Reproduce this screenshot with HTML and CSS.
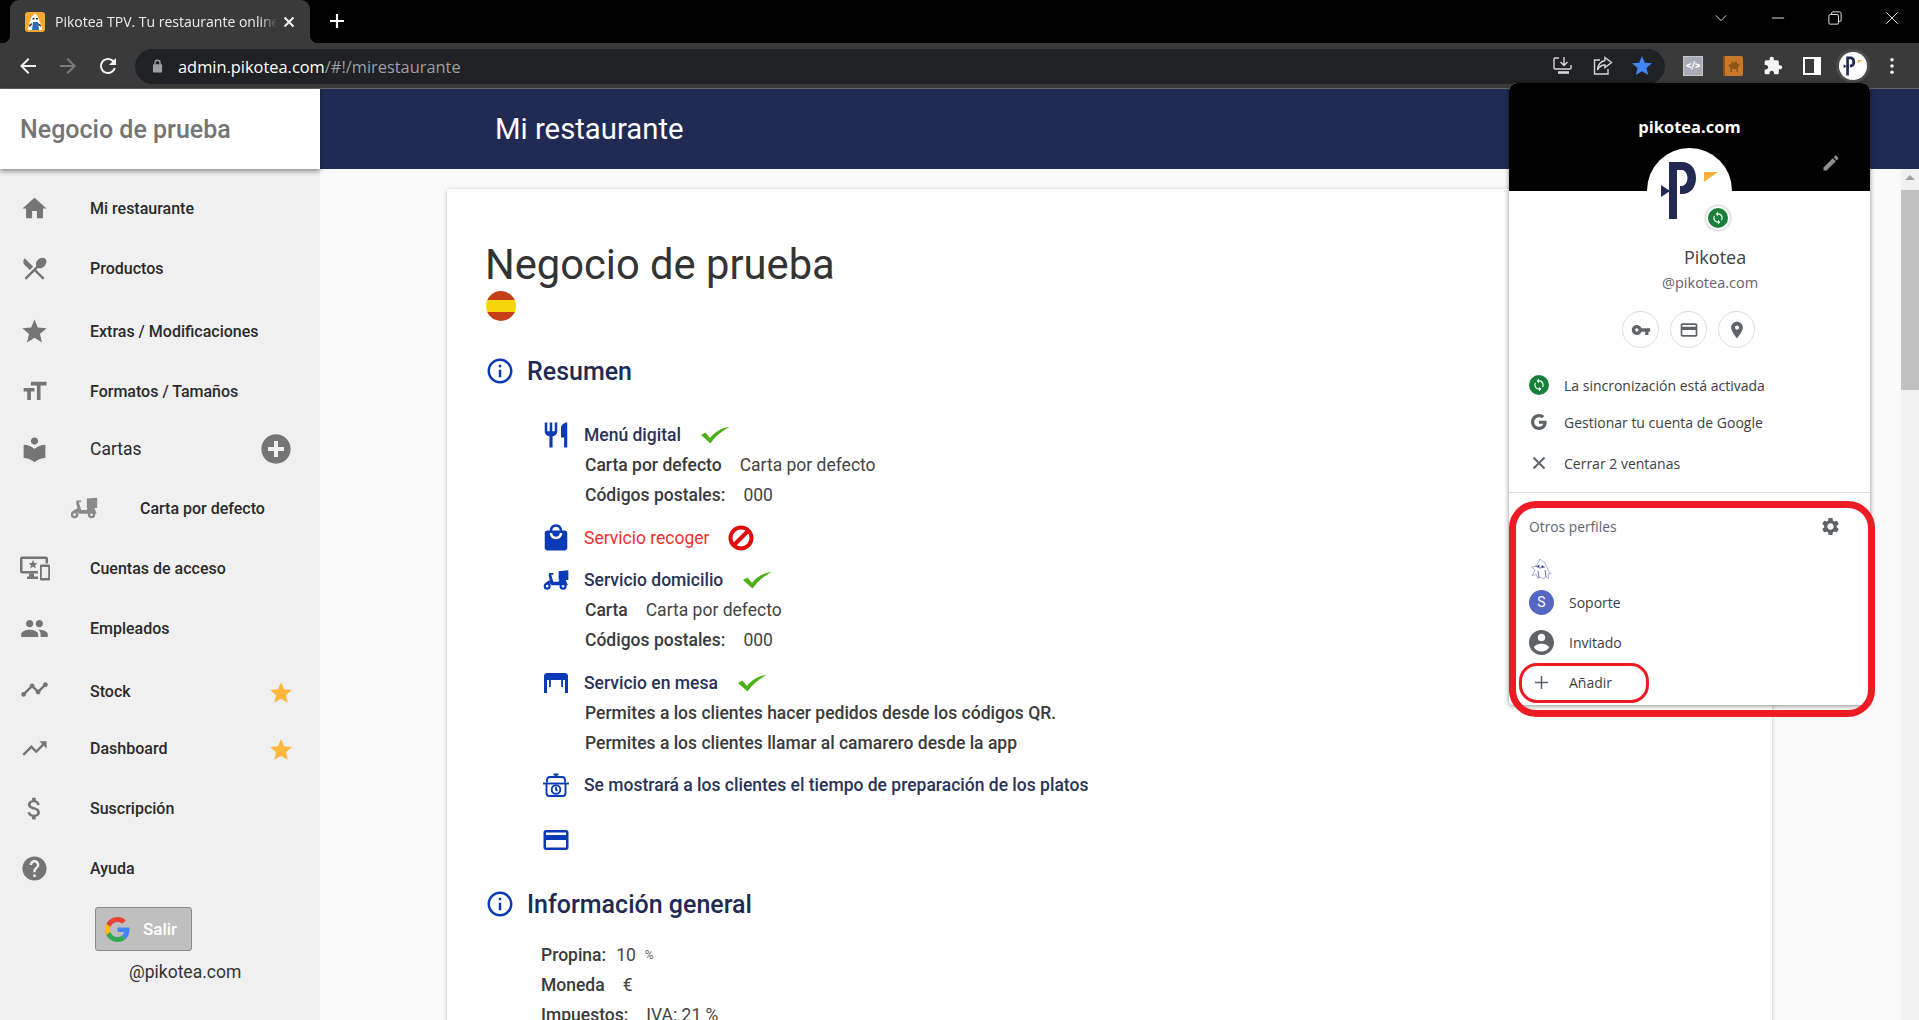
FILE: index.html
```html
<!DOCTYPE html>
<html lang="es">
<head>
    <meta charset="UTF-8">
    <title>Pikotea TPV. Tu restaurante online</title>
    <link rel="stylesheet" href="styles.css">
</head>
<body>

    <!-- shared icons -->
    <svg class="defs" aria-hidden="true">
        <symbol id="i-star" viewBox="0 0 24 24"><path d="M12 17.27L18.18 21l-1.64-7.03L22 9.24l-7.19-.61L12 2 9.19 8.63 2 9.24l5.46 4.73L5.82 21z"/></symbol>
        <symbol id="i-sync" viewBox="0 0 24 24"><path d="M12 4V1L8 5l4 4V6c3.31 0 6 2.69 6 6 0 1.01-.25 1.97-.7 2.8l1.46 1.46C19.54 15.03 20 13.57 20 12c0-4.42-3.58-8-8-8zm0 14c-3.31 0-6-2.69-6-6 0-1.01.25-1.97.7-2.8L5.24 7.74C4.46 8.97 4 10.43 4 12c0 4.42 3.58 8 8 8v3l4-4-4-4v3z"/></symbol>
        <symbol id="i-info" viewBox="0 0 24 24"><path d="M11 7h2v2h-2zm0 4h2v6h-2zm1-9C6.48 2 2 6.48 2 12s4.48 10 10 10 10-4.48 10-10S17.52 2 12 2zm0 18c-4.41 0-8-3.59-8-8s3.59-8 8-8 8 3.59 8 8-3.59 8-8 8z"/></symbol>
        <symbol id="i-card" viewBox="0 0 24 24"><path d="M20 4H4c-1.11 0-1.99.89-1.99 2L2 18c0 1.11.89 2 2 2h16c1.11 0 2-.89 2-2V6c0-1.11-.89-2-2-2zm0 14H4v-6h16v6zm0-10H4V6h16v2z"/></symbol>
        <symbol id="i-scooter" viewBox="-1 -6 34 34">
            <path d="M19 1l11-1v11H19z"/>
            <path d="M8 3h5v2h-2.500l2.500 8h5.500l1.500-2h7l2.500 6H10.500C10 15 8 14 4 16.500 3 14.500 5.500 12.500 9 11.500L7.500 5H8z"/>
            <path fill-rule="evenodd" d="M6 14a4 4 0 1 0 0 8 4 4 0 0 0 0-8zm0 2.500a1.500 1.500 0 1 1 0 3 1.500 1.500 0 0 1 0-3zM24 14a4 4 0 1 0 0 8 4 4 0 0 0 0-8zm0 2.500a1.500 1.500 0 1 1 0 3 1.500 1.500 0 0 1 0-3z"/>
        </symbol>
        <symbol id="i-check" viewBox="0 0 30 18"><path d="M1 9l4.500-2.500L10 12C15 6 22 1.500 29.500 1 22 5 15.500 10 10.500 17.500z"/></symbol>
        <symbol id="i-logo" viewBox="0 0 85 85">
            <circle cx="42.500" cy="42.500" r="42.500" fill="#fff"/>
            <path fill="#212a52" d="M22 14H35C44 14 49 21 49 30S44 46 35 46H33V38H35C38 38 40.500 34 40.500 30S38 22 35 22H30V71H22Z"/>
            <path fill="#212a52" d="M14 37l9 6-9 6zM23 43l7-5v11z"/>
            <path fill="#fbb03b" d="M57 24h14l-14 10z"/>
        </symbol>
        <symbol id="i-g" viewBox="0 0 48 48">
            <path fill="#EA4335" d="M24 9.500c3.540 0 6.710 1.220 9.210 3.600l6.850-6.850C35.900 2.380 30.470 0 24 0 14.620 0 6.510 5.380 2.560 13.220l7.980 6.190C12.430 13.720 17.740 9.500 24 9.500z"/>
            <path fill="#4285F4" d="M46.980 24.550c0-1.570-.15-3.090-.38-4.550H24v9.020h12.940c-.58 2.960-2.260 5.480-4.780 7.180l7.730 6c4.510-4.180 7.090-10.360 7.090-17.650z"/>
            <path fill="#FBBC05" d="M10.530 28.590c-.48-1.450-.76-2.990-.76-4.590s.27-3.140.76-4.590l-7.980-6.190C.92 16.460 0 20.120 0 24c0 3.880.92 7.540 2.560 10.780l7.970-6.190z"/>
            <path fill="#34A853" d="M24 48c6.480 0 11.930-2.130 15.890-5.810l-7.730-6c-2.150 1.450-4.920 2.300-8.160 2.300-6.260 0-11.570-4.220-13.470-9.910l-7.980 6.190C6.510 42.620 14.620 48 24 48z"/>
        </symbol>
    </svg>

    <!-- browser chrome -->
    <div class="tabstrip">
        <div class="tab">
            <svg class="favicon" viewBox="0 0 20 20">
                <rect width="20" height="20" rx="3" fill="#f5a733"/>
                <path fill="#fff" d="M10 1l3 4 3.500 9 1 4H2.500l1.500-5 2-7z"/>
                <path fill="#2f6fb5" d="M8 10h5l1 8H7z"/>
                <path fill="#333" d="M7.500 6h2v1.500h-2zM11 6h2v1.500h-2zM4 13l3-2v1.500L4.500 15zM16 13l-3-2v1.500l2.500 2.500z"/>
            </svg>
            <span class="tab-title">Pikotea TPV. Tu restaurante online</span>
            <svg class="tab-close" viewBox="0 0 12 12"><path d="M1.500 1.500l9 9M10.500 1.500l-9 9"/></svg>
        </div>
        <svg class="new-tab" viewBox="0 0 16 16"><path d="M8 1v14M1 8h14"/></svg>
        <div class="window-controls">
            <svg viewBox="0 0 16 16"><path d="M2 5l6 6 6-6"/></svg>
            <svg viewBox="0 0 16 16"><path d="M1 8h14"/></svg>
            <svg viewBox="0 0 16 16"><path d="M4 4V2.500A1.500 1.500 0 0 1 5.500 1H13a2 2 0 0 1 2 2v7.500A1.500 1.500 0 0 1 13.500 12H12M2.500 4H10.500A1.500 1.500 0 0 1 12 5.500V13.500A1.500 1.500 0 0 1 10.500 15H2.500A1.500 1.500 0 0 1 1 13.500V5.500A1.500 1.500 0 0 1 2.500 4z"/></svg>
            <svg viewBox="0 0 16 16"><path d="M1.500 1.500l13 13M14.500 1.500l-13 13"/></svg>
        </div>
    </div>

    <div class="toolbar">
        <svg class="nav-btn" viewBox="0 0 24 24"><path fill="#f1f1f1" d="M20 11H7.830l5.590-5.590L12 4l-8 8 8 8 1.410-1.410L7.830 13H20v-2z"/></svg>
        <svg class="nav-btn" viewBox="0 0 24 24"><path fill="#7c7c7c" d="M12 4l-1.410 1.410L16.170 11H4v2h12.170l-5.580 5.590L12 20l8-8z"/></svg>
        <svg class="nav-btn" viewBox="0 0 24 24"><path fill="#f1f1f1" d="M17.650 6.350C16.200 4.900 14.210 4 12 4c-4.420 0-7.990 3.580-7.990 8s3.570 8 7.990 8c3.730 0 6.840-2.550 7.730-6h-2.080c-.82 2.330-3.040 4-5.650 4-3.310 0-6-2.690-6-6s2.690-6 6-6c1.660 0 3.140.69 4.220 1.780L13 11h7V4l-2.350 2.350z"/></svg>
        <div class="omnibox">
            <svg class="lock" viewBox="0 0 12 14"><path fill="#9aa0a6" d="M10 5H9.500V3.500a3.500 3.500 0 0 0-7 0V5H2a1 1 0 0 0-1 1v7a1 1 0 0 0 1 1h8a1 1 0 0 0 1-1V6a1 1 0 0 0-1-1zM4 5V3.500a2 2 0 0 1 4 0V5z"/></svg>
            <span class="url">admin.pikotea.com<span class="url-path">/#!/mirestaurante</span></span>
            <div class="omni-actions">
                <svg viewBox="0 0 20 20"><path fill="none" stroke="#d6d6d6" stroke-width="1.400" d="M6 2H2a1 1 0 0 0-1 1v9a1 1 0 0 0 1 1h15a1 1 0 0 0 1-1V9M11 1v8M7.500 6l3.500 3.500L14.500 6"/><path fill="none" stroke="#d6d6d6" stroke-width="2.600" d="M5 16.500h11"/></svg>
                <svg viewBox="0 0 20 20"><path fill="none" stroke="#d6d6d6" stroke-width="1.400" d="M7 4H1.500v14H15v-5M12 1.500l6.500 5-6.500 5V9C8.500 9 6 11 4.500 14 4.500 9 8 5 12 4.500z"/></svg>
                <svg class="omni-star" viewBox="0 0 24 24"><use href="#i-star"/></svg>
            </div>
        </div>
        <div class="extensions">
            <div class="ext-code">&lt;/&gt;</div>
            <svg class="ext" viewBox="0 0 20 20">
                <rect width="20" height="20" rx="2" fill="#c9782a"/>
                <path fill="#8a4f14" d="M0 0h2v20H0z"/>
                <path fill="#8e5518" d="M5 9l3-1 1-3 2 2 2-2 2 3h2l-1 2-1 1v5h-1.500v-3H9v3H7.500v-4z"/>
            </svg>
            <svg class="ext" viewBox="0 0 24 24"><path fill="#f5f5f5" d="M20.500 11H19V7c0-1.100-.9-2-2-2h-4V3.500C13 2.120 11.880 1 10.500 1S8 2.120 8 3.500V5H4c-1.100 0-1.990.9-1.990 2v3.800H3.500c1.490 0 2.700 1.210 2.700 2.700s-1.210 2.700-2.700 2.700H2V20c0 1.100.9 2 2 2h3.800v-1.500c0-1.490 1.210-2.700 2.700-2.700 1.490 0 2.700 1.210 2.700 2.700V22H17c1.100 0 2-.9 2-2v-4h1.500c1.380 0 2.500-1.120 2.500-2.500S21.880 11 20.500 11z"/></svg>
            <svg class="ext" viewBox="0 0 20 20"><path fill="#fff" fill-rule="evenodd" d="M1 1h18v18H1zM3 3v14h9V3z"/></svg>
            <div class="avatar-ring"><svg viewBox="0 0 85 85"><use href="#i-logo"/></svg></div>
            <svg class="kebab" viewBox="0 0 6 20"><circle cx="3" cy="3" r="2" fill="#f1f1f1"/><circle cx="3" cy="10" r="2" fill="#f1f1f1"/><circle cx="3" cy="17" r="2" fill="#f1f1f1"/></svg>
        </div>
    </div>

    <div class="app">
        <aside class="sidebar">
            <div class="brand">Negocio de prueba</div>
            <nav class="nav">
                <a class="nav-row">
                    <svg viewBox="0 0 24 24"><path d="M10 20v-6h4v6h5v-8h3L12 3 2 12h3v8z"/></svg>
                    <span>Mi restaurante</span>
                </a>
                <a class="nav-row">
                    <svg viewBox="0 0 24 24"><path d="M8.100 13.340l2.830-2.830L3.910 3.500c-1.560 1.560-1.560 4.090 0 5.660l4.190 4.180zm6.780-1.810c1.530.71 3.680.21 5.270-1.380 1.910-1.910 2.280-4.650.81-6.120-1.460-1.460-4.200-1.100-6.120.81-1.590 1.590-2.090 3.740-1.380 5.270L3.700 19.870l1.410 1.410L12 14.410l6.880 6.880 1.410-1.410L13.410 13l1.470-1.470z"/></svg>
                    <span>Productos</span>
                </a>
                <a class="nav-row low3">
                    <svg viewBox="0 0 24 24"><use href="#i-star"/></svg>
                    <span>Extras / Modificaciones</span>
                </a>
                <a class="nav-row">
                    <svg viewBox="0 0 24 24"><path d="M9 4v3h5v12h3V7h5V4H9zm-6 8h3v7h3v-7h3V9H3v3z"/></svg>
                    <span>Formatos / Tamaños</span>
                </a>
                <a class="nav-row up2">
                    <svg viewBox="0 0 24 24"><path d="M12 11.550C9.640 9.350 6.480 8 3 8v11c3.480 0 6.640 1.350 9 3.550 2.360-2.190 5.520-3.550 9-3.550V8c-3.480 0-6.640 1.350-9 3.550zM12 8c1.660 0 3-1.340 3-3s-1.340-3-3-3-3 1.340-3 3 1.340 3 3 3z"/></svg>
                    <span class="plain">Cartas</span>
                    <svg class="nav-add" viewBox="0 0 24 24"><path d="M12 1C5.900 1 1 5.900 1 12s4.900 11 11 11 11-4.900 11-11S18.100 1 12 1zm6 12.500h-4.500V18h-3v-4.500H6v-3h4.500V6h3v4.500H18z"/></svg>
                </a>
                <a class="nav-row sub up1">
                    <svg viewBox="0 0 34 34"><use href="#i-scooter"/></svg>
                    <span>Carta por defecto</span>
                </a>
                <a class="nav-row">
                    <svg class="wide" viewBox="0 0 30 24">
                        <path d="M2 0h24a2 2 0 0 1 2 2v5h-2.500V2.500h-23v12H18V17H2a2 2 0 0 1-2-2V2a2 2 0 0 1 2-2z"/>
                        <path d="M9 17h5v3h4v2.500H7V20h2z"/>
                        <path d="M21 8h8a1 1 0 0 1 1 1v14a1 1 0 0 1-1 1h-8a1 1 0 0 1-1-1V9a1 1 0 0 1 1-1zm.8 2.500v11h6.400v-11z"/>
                        <path d="M13 3.500l1.300 2.900 3.100.3-2.300 2 .7 3.100-2.800-1.600-2.800 1.600.7-3.100-2.300-2 3.100-.3z"/>
                    </svg>
                    <span>Cuentas de acceso</span>
                </a>
                <a class="nav-row">
                    <svg viewBox="0 0 24 24"><path d="M16 11c1.660 0 2.990-1.340 2.990-3S17.660 5 16 5c-1.660 0-3 1.340-3 3s1.340 3 3 3zm-8 0c1.660 0 2.990-1.340 2.990-3S9.660 5 8 5C6.340 5 5 6.340 5 8s1.340 3 3 3zm0 2c-2.330 0-7 1.170-7 3.500V19h14v-2.500c0-2.330-4.670-3.500-7-3.500zm8 0c-.29 0-.62.02-.97.05 1.160.84 1.970 1.970 1.970 3.450V19h6v-2.500c0-2.330-4.670-3.500-7-3.500z"/></svg>
                    <span>Empleados</span>
                </a>
                <a class="nav-row low3">
                    <svg class="raised" viewBox="0 0 24 24"><path d="M23 8c0 1.100-.9 2-2 2-.18 0-.35-.02-.51-.07l-3.560 3.550c.05.16.07.34.07.52 0 1.100-.9 2-2 2s-2-.9-2-2c0-.18.02-.36.07-.52l-2.550-2.550c-.16.05-.34.07-.52.07s-.36-.02-.52-.07l-4.550 4.560c.05.16.07.33.07.51 0 1.100-.9 2-2 2s-2-.9-2-2 .9-2 2-2c.18 0 .35.02.51.07l4.560-4.550C8.020 9.360 8 9.180 8 9c0-1.100.9-2 2-2s2 .9 2 2c0 .18-.02.36-.07.52l2.550 2.550c.16-.05.34-.07.52-.07s.36.02.52.07l3.550-3.560C19.020 8.350 19 8.180 19 8c0-1.100.9-2 2-2s2 .9 2 2z"/></svg>
                    <span>Stock</span>
                    <svg class="nav-pro" viewBox="0 0 24 24"><use href="#i-star"/></svg>
                </a>
                <a class="nav-row up3">
                    <svg viewBox="0 0 24 24"><path d="M16 6l2.290 2.290-4.880 4.880-4-4L2 16.590 3.410 18l6-6 4 4 6.300-6.290L22 12V6z"/></svg>
                    <span>Dashboard</span>
                    <svg class="nav-pro" viewBox="0 0 24 24"><use href="#i-star"/></svg>
                </a>
                <a class="nav-row">
                    <svg viewBox="0 0 24 24"><path d="M11.800 10.900c-2.270-.59-3-1.200-3-2.150 0-1.090 1.010-1.850 2.700-1.850 1.780 0 2.440.85 2.500 2.100h2.210c-.07-1.720-1.120-3.300-3.210-3.810V3h-3v2.160c-1.940.42-3.500 1.680-3.500 3.610 0 2.310 1.910 3.460 4.700 4.130 2.500.6 3 1.480 3 2.410 0 .69-.49 1.790-2.700 1.790-2.060 0-2.870-.92-2.980-2.100h-2.200c.12 2.190 1.760 3.420 3.680 3.830V21h3v-2.150c1.950-.37 3.500-1.500 3.500-3.550 0-2.840-2.430-3.810-4.700-4.400z"/></svg>
                    <span>Suscripción</span>
                </a>
                <a class="nav-row">
                    <svg viewBox="0 0 24 24"><path d="M12 2C6.480 2 2 6.480 2 12s4.480 10 10 10 10-4.480 10-10S17.520 2 12 2zm1 17h-2v-2h2v2zm2.070-7.750l-.9.920C13.450 12.900 13 13.500 13 15h-2v-.5c0-1.100.45-2.100 1.170-2.830l1.240-1.260c.37-.36.59-.86.59-1.410 0-1.100-.9-2-2-2s-2 .9-2 2H8c0-2.210 1.790-4 4-4s4 1.790 4 4c0 .88-.36 1.680-.93 2.250z"/></svg>
                    <span>Ayuda</span>
                </a>
            </nav>
            <button class="logout">
                <svg viewBox="0 0 48 48"><use href="#i-g"/></svg>
                <span>Salir</span>
            </button>
            <div class="sidebar-email">@pikotea.com</div>
        </aside>

        <div class="main">
            <header class="topbar">Mi restaurante</header>
            <div class="content">
                <section class="card">
                    <h1>Negocio de prueba</h1>
                    <div class="flag"></div>

                    <h2 class="section-title">
                        <svg viewBox="0 0 24 24"><use href="#i-info"/></svg>
                        Resumen
                    </h2>

                    <div class="services first">
                        <div class="line head">
                            <svg class="svc-icon" viewBox="0 0 24 24"><path d="M11 9H9V2H7v7H5V2H3v7c0 2.120 1.660 3.840 3.750 3.970V22h2.500v-9.030C11.340 12.840 13 11.120 13 9V2h-2v7zm5-3v8h2.500v8H21V2c-2.760 0-5 2.240-5 4z"/></svg>
                            <span>Menú digital</span>
                            <svg class="check" viewBox="0 0 30 18"><use href="#i-check"/></svg>
                        </div>
                        <div class="line detail"><b>Carta por defecto</b><span class="gap19">Carta por defecto</span></div>
                        <div class="line detail"><b>Códigos postales:</b><span class="gap19">000</span></div>
                    </div>

                    <div class="services">
                        <div class="line head off">
                            <svg class="svc-icon" viewBox="0 0 24 24"><path d="M19 6h-2c0-2.760-2.240-5-5-5S7 3.240 7 6H5c-1.100 0-1.990.9-1.990 2L3 20c0 1.100.9 2 2 2h14c1.100 0 2-.9 2-2V8c0-1.100-.9-2-2-2zm-7-3c1.660 0 3 1.340 3 3H9c0-1.660 1.340-3 3-3zm0 10c-2.760 0-5-2.240-5-5h2c0 1.660 1.340 3 3 3s3-1.340 3-3h2c0 2.760-2.240 5-5 5z"/></svg>
                            <span>Servicio recoger</span>
                            <svg class="forbid" viewBox="0 0 26 26"><circle cx="13" cy="13" r="10.500"/><path d="M6 20L20 6"/></svg>
                        </div>
                    </div>

                    <div class="services">
                        <div class="line head">
                            <svg class="svc-icon" viewBox="0 0 34 34"><use href="#i-scooter"/></svg>
                            <span>Servicio domicilio</span>
                            <svg class="check" viewBox="0 0 30 18"><use href="#i-check"/></svg>
                        </div>
                        <div class="line detail"><b>Carta</b><span class="gap19">Carta por defecto</span></div>
                        <div class="line detail"><b>Códigos postales:</b><span class="gap19">000</span></div>
                    </div>

                    <div class="services">
                        <div class="line head">
                            <svg class="svc-icon" viewBox="-3 -5 30 30">
                                <path d="M3 0h18c1.500 0 3 1 3 3v17h-3V7H3v13H0V3C0 1 1.500 0 3 0z"/>
                                <path d="M5 7h1.800v7H5zM17.200 7H19v7h-1.800z"/>
                            </svg>
                            <span>Servicio en mesa</span>
                            <svg class="check" viewBox="0 0 30 18"><use href="#i-check"/></svg>
                        </div>
                        <div class="line detail"><b>Permites a los clientes hacer pedidos desde los códigos QR.</b></div>
                        <div class="line detail"><b>Permites a los clientes llamar al camarero desde la app</b></div>
                    </div>

                    <div class="services single">
                        <div class="line head">
                            <svg class="svc-icon pot" viewBox="-1.500 -3 30 30">
                                <path d="M11 1.500h5M13.500 1.500V4"/>
                                <path d="M4.500 9.500V7a3 3 0 0 1 3-3h12a3 3 0 0 1 3 3v2.500"/>
                                <path d="M.5 10.500h26"/>
                                <path d="M4 10.500V20a3 3 0 0 0 3 3h13a3 3 0 0 0 3-3v-9.500"/>
                                <circle cx="13.500" cy="16.500" r="4.300"/>
                                <path d="M13.500 14v2.800l1.600 1"/>
                            </svg>
                            <span>Se mostrará a los clientes el tiempo de preparación de los platos</span>
                        </div>
                    </div>

                    <div class="services pay">
                        <div class="line head">
                            <svg class="svc-icon" viewBox="0 0 24 24"><use href="#i-card"/></svg>
                        </div>
                    </div>

                    <h2 class="section-title general">
                        <svg viewBox="0 0 24 24"><use href="#i-info"/></svg>
                        Información general
                    </h2>

                    <div class="general-list">
                        <div class="line"><b>Propina:</b><span class="gap10">10</span><small>%</small></div>
                        <div class="line"><b>Moneda</b><span class="gap19">€</span></div>
                        <div class="line"><b>Impuestos:</b><span class="gap19">IVA: 21 %</span></div>
                    </div>
                </section>
                <div class="scrollbar">
                    <div class="scroll-arrow"></div>
                    <div class="scroll-thumb"></div>
                </div>
            </div>
        </div>
    </div>

    <!-- profile menu, open over the page -->
    <div class="profile">
        <div class="profile-banner">
            <span class="profile-domain">pikotea.com</span>
            <svg class="profile-edit" viewBox="0 0 24 24"><path d="M3 17.250V21h3.750L17.810 9.940l-3.750-3.750L3 17.250zM20.710 7.040c.39-.39.39-1.020 0-1.410l-2.340-2.340c-.39-.39-1.020-.39-1.410 0l-1.830 1.830 3.750 3.750 1.830-1.830z"/></svg>
        </div>
        <div class="profile-photo">
            <svg viewBox="0 0 85 85"><use href="#i-logo"/></svg>
            <div class="sync-badge"><span class="sync-dot large"><svg viewBox="0 0 24 24"><use href="#i-sync"/></svg></span></div>
        </div>
        <div class="profile-name">Pikotea</div>
        <div class="profile-mail">@pikotea.com</div>
        <div class="profile-buttons">
            <div class="round-btn"><svg viewBox="0 0 24 24"><path d="M12.650 10C11.830 7.670 9.610 6 7 6c-3.310 0-6 2.690-6 6s2.690 6 6 6c2.610 0 4.830-1.670 5.650-4H17v4h4v-4h2v-4H12.650zM7 14c-1.100 0-2-.9-2-2s.9-2 2-2 2 .9 2 2-.9 2-2 2z"/></svg></div>
            <div class="round-btn"><svg viewBox="0 0 24 24"><use href="#i-card"/></svg></div>
            <div class="round-btn"><svg viewBox="0 0 24 24"><path d="M12 2C8.130 2 5 5.130 5 9c0 5.250 7 13 7 13s7-7.750 7-13c0-3.870-3.130-7-7-7zm0 9.500c-1.380 0-2.500-1.120-2.500-2.500s1.120-2.500 2.500-2.500 2.500 1.120 2.500 2.500-1.120 2.500-2.500 2.500z"/></svg></div>
        </div>
        <div class="menu-list">
            <div class="menu-row"><span class="sync-dot"><svg viewBox="0 0 24 24"><use href="#i-sync"/></svg></span>La sincronización está activada</div>
            <div class="menu-row"><svg class="menu-g" viewBox="0 0 48 48"><path d="M46.980 24.550c0-1.570-.15-3.090-.38-4.550H24v9.020h12.940c-.58 2.960-2.260 5.480-4.780 7.180C30 37.600 27.240 38.490 24 38.490c-7.800 0-14.230-6.500-14.230-14.490S16.200 9.500 24 9.500c3.540 0 6.710 1.220 9.210 3.600l6.850-6.850C35.900 2.380 30.470 0 24 0 10.750 0 0 10.750 0 24s10.750 24 24 24c6.480 0 11.930-2.130 15.890-5.810 4.510-4.180 7.090-10.360 7.090-17.640z"/></svg>Gestionar tu cuenta de Google</div>
            <div class="menu-row"><svg class="menu-x" viewBox="0 0 14 14"><path d="M1.500 1.500l11 11M12.500 1.500l-11 11"/></svg>Cerrar 2 ventanas</div>
        </div>
        <div class="others">
            <div class="others-head">
                <span>Otros perfiles</span>
                <svg viewBox="0 0 24 24"><path d="M19.140 12.940c.04-.3.06-.61.06-.94 0-.32-.02-.64-.07-.94l2.030-1.580c.18-.14.230-.41.120-.61l-1.920-3.320c-.12-.22-.37-.29-.59-.22l-2.390.96c-.5-.38-1.030-.7-1.620-.94l-.36-2.540c-.04-.24-.24-.41-.48-.41h-3.840c-.24 0-.43.17-.47.41l-.36 2.540c-.59.24-1.130.57-1.620.94l-2.390-.96c-.22-.08-.47 0-.59.22L2.740 8.870c-.12.21-.08.47.12.61l2.030 1.580c-.05.3-.09.63-.09.94s.02.64.07.94l-2.030 1.580c-.18.14-.23.41-.12.61l1.920 3.320c.12.22.37.29.59.22l2.390-.96c.5.38 1.030.7 1.620.94l.36 2.540c.05.24.24.41.48.41h3.840c.24 0 .44-.17.47-.41l.36-2.540c.59-.24 1.130-.56 1.620-.94l2.390.96c.22.08.47 0 .59-.22l1.920-3.320c.12-.22.07-.47-.12-.61l-2.010-1.580zM12 15.600c-1.980 0-3.600-1.620-3.600-3.600s1.620-3.600 3.600-3.600 3.600 1.620 3.600 3.600-1.620 3.600-3.600 3.600z"/></svg>
            </div>
            <div class="profile-row mascot">
                <svg viewBox="0 0 22 22">
                    <path fill="none" stroke="#a9afd0" d="M10 1l5 4 3 7 3 4-3-.5.5 5-3-2-2 2.500-3-2-3 1.500-1-4-4.500 1L5 12 1.500 9 6 8.500z"/>
                    <path fill="none" stroke="#6a73b0" d="M5 8l5 2 5-1M8 13l1 7M15 12l1 7"/>
                    <circle cx="8.500" cy="8" r="1.100" fill="#2a3a9a"/><circle cx="12.500" cy="8.500" r="1.100" fill="#2a3a9a"/>
                </svg>
            </div>
            <div class="profile-row"><span class="letter-avatar">S</span>Soporte</div>
            <div class="profile-row"><svg class="guest" viewBox="2 2 20 20"><path d="M12 2C6.480 2 2 6.480 2 12s4.480 10 10 10 10-4.480 10-10S17.520 2 12 2zm0 3c1.660 0 3 1.340 3 3s-1.340 3-3 3-3-1.340-3-3 1.340-3 3-3zm0 14.200c-2.500 0-4.710-1.280-6-3.220.03-1.990 4-3.080 6-3.080 1.990 0 5.970 1.090 6 3.080-1.290 1.940-3.500 3.220-6 3.220z"/></svg>Invitado</div>
            <div class="profile-row"><svg class="plus" viewBox="0 0 16 16"><path d="M8 1v14M1 8h14"/></svg>Añadir</div>
        </div>
    </div>

    <!-- red marks drawn over the screenshot -->
    <div class="mark mark-outer"></div>
    <div class="mark mark-inner"></div>

</body>
</html>
```

FILE: styles.css
```css
* {
    box-sizing: border-box;
}

html, body {
    height: 100%;
}

body {
    margin: 0;
    overflow: hidden;
    font-family: Roboto, "Liberation Sans", sans-serif;
    color: #333;
    background-color: #fafafa;
    display: flex;
    flex-direction: column;
}

.defs {
    display: none;
}

/* browser chrome */
.tabstrip {
    height: 43px;
    background-color: #000;
    display: flex;
    align-items: flex-start;
    flex-shrink: 0;
}

.tab {
    position: relative;
    width: 300px;
    height: 43px;
    margin-left: 10px;
    padding-left: 15px;
    background-color: #3a3a3a;
    border-radius: 9px 9px 0 0;
    display: flex;
    align-items: center;
    font-family: "Open Sans", sans-serif;
    font-size: 14px;
    color: #ececec;
}

.tab::before,
.tab::after {
    content: "";
    position: absolute;
    bottom: 0;
    width: 8px;
    height: 8px;
}

.tab::before {
    left: -8px;
    background: radial-gradient(circle at 0 0, #000 8px, #3a3a3a 8.500px);
}

.tab::after {
    right: -8px;
    background: radial-gradient(circle at 100% 0, #000 8px, #3a3a3a 8.500px);
}

.favicon {
    width: 20px;
    height: 20px;
    flex-shrink: 0;
}

.tab-title {
    width: 222px;
    margin-left: 10px;
    white-space: nowrap;
    overflow: hidden;
    -webkit-mask-image: linear-gradient(to right, #000 205px, transparent 222px);
    mask-image: linear-gradient(to right, #000 205px, transparent 222px);
}

.tab-close {
    width: 12px;
    height: 12px;
    margin-left: 6px;
    fill: none;
    stroke: #f1f1f1;
    stroke-width: 2;
}

.new-tab {
    width: 16px;
    height: 16px;
    margin: 13px 0 0 19px;
    fill: none;
    stroke: #fff;
    stroke-width: 2.200;
}

.window-controls {
    margin-left: auto;
    display: flex;
    gap: 43px;
    padding: 11px 20px 0 0;
}

.window-controls svg {
    width: 14px;
    height: 14px;
    fill: none;
    stroke: #e8e8e8;
    stroke-width: 1.100;
}

.toolbar {
    height: 46px;
    padding: 5px 0 4px 16px;
    background-color: #3a3a3a;
    border-bottom: 1px solid #666;
    display: flex;
    align-items: center;
    flex-shrink: 0;
}

.nav-btn {
    width: 24px;
    height: 24px;
    margin-right: 16px;
    flex-shrink: 0;
}

.omnibox {
    width: 1530px;
    height: 35px;
    margin-left: -1px;
    padding: 0 11px 0 16px;
    background-color: #202124;
    border-radius: 18px;
    display: flex;
    align-items: center;
    font-family: "Open Sans", sans-serif;
    font-size: 16.400px;
    color: #fff;
}

.lock {
    width: 11px;
    height: 14px;
    margin-left: 1px;
}

.url {
    margin-left: 15px;
}

.url-path {
    color: #9aa0a6;
}

.omni-actions {
    margin-left: auto;
    display: flex;
    align-items: center;
    gap: 20px;
}

.omni-actions svg {
    width: 20px;
    height: 20px;
}

.omni-actions .omni-star {
    width: 24px;
    height: 24px;
    margin-left: -3px;
    fill: #4285f4;
}

.extensions {
    flex: 1;
    display: flex;
    align-items: center;
    padding-left: 18px;
}

.ext-code {
    width: 20px;
    height: 20px;
    background-color: #a6abb5;
    border: 1px solid #c4c7cd;
    font-size: 11px;
    font-weight: 700;
    letter-spacing: -0.5px;
    line-height: 17px;
    text-align: center;
    color: #fff;
    flex-shrink: 0;
}

.ext {
    width: 20px;
    height: 20px;
    margin-left: 20px;
    flex-shrink: 0;
}

.ext:nth-of-type(3) {
    margin-left: 19px;
}

.avatar-ring {
    width: 34px;
    height: 34px;
    margin-left: 14px;
    padding: 3px;
    background-color: #4c4c4c;
    border-radius: 50%;
    flex-shrink: 0;
}

.avatar-ring svg {
    display: block;
    width: 28px;
    height: 28px;
}

.kebab {
    width: 6px;
    height: 18px;
    margin-left: 19px;
}

/* application */
.app {
    flex: 1;
    min-height: 0;
    display: flex;
}

.sidebar {
    width: 320px;
    flex-shrink: 0;
    background-color: #f0f0f0;
}

.brand {
    height: 80px;
    padding-left: 20px;
    background-color: #fff;
    box-shadow: 0 2px 5px rgba(0, 0, 0, 0.45);
    font-size: 25px;
    font-weight: 500;
    line-height: 82px;
    color: #757575;
    position: relative;
}

.nav {
    padding-top: 9px;
}

.nav-row {
    height: 60px;
    padding-left: 20px;
    display: flex;
    align-items: center;
    font-size: 16px;
    font-weight: 500;
    color: #2a2a2a;
}

.nav-row > svg:first-child {
    width: 29px;
    height: 29px;
    flex-shrink: 0;
    fill: #757575;
}

.nav-row > span {
    margin-left: 41px;
}

.nav-row > svg.wide {
    width: 30px;
    height: 25px;
}

.nav-row > svg.wide + span {
    margin-left: 40px;
}

.nav-row > svg.raised {
    margin-top: -4px;
}

.nav-row > .plain {
    font-size: 17.500px;
    font-weight: 400;
}

.nav-row.sub {
    padding-left: 68px;
}

.nav-row.sub > svg:first-child {
    width: 32px;
    height: 32px;
    fill: #8a8a8a;
}

.nav-row.sub > span {
    margin-left: 40px;
}

.low3 {
    margin-top: 3px;
}

.up1 {
    margin-top: -1px;
}

.up2 {
    margin-top: -2px;
}

.up3 {
    margin-top: -3px;
}

.nav-add {
    width: 32px;
    height: 32px;
    margin-left: auto;
    margin-right: 28px;
    fill: #757575;
}

.nav-pro {
    width: 26px;
    height: 26px;
    margin-left: auto;
    margin-right: 26px;
    margin-top: 4px;
    fill: #ffb63c;
}

.logout {
    width: 97px;
    height: 44px;
    margin: 9px 0 0 95px;
    padding: 0 0 0 9px;
    background-color: #bfbfbf;
    border: 1px solid #8a8a8a;
    border-radius: 3px;
    display: flex;
    align-items: center;
    font-family: Roboto, sans-serif;
    font-size: 17px;
    font-weight: 500;
    color: #fff;
}

.logout svg {
    width: 25px;
    height: 25px;
}

.logout span {
    margin-left: 13px;
}

.sidebar-email {
    margin: 10px 0 0 129px;
    font-size: 17.500px;
    line-height: 22px;
    color: #333;
}

.main {
    flex: 1;
    min-width: 0;
    display: flex;
    flex-direction: column;
}

.topbar {
    height: 80px;
    padding-left: 175px;
    background-color: #212a52;
    font-size: 29.300px;
    line-height: 80px;
    color: #fff;
    flex-shrink: 0;
}

.content {
    flex: 1;
    min-height: 0;
    display: flex;
    overflow: hidden;
}

.card {
    width: 1325px;
    height: 900px;
    margin: 20px 0 0 127px;
    padding: 51px 0 0 38px;
    background-color: #fff;
    box-shadow: 0 1px 4px rgba(0, 0, 0, 0.25);
    border-radius: 2px 2px 0 0;
    flex-shrink: 0;
}

h1 {
    margin: 0;
    font-size: 41.700px;
    font-weight: 400;
    line-height: 50px;
    color: #333;
}

.flag {
    width: 30px;
    height: 30px;
    margin: 1px 0 0 1px;
    border-radius: 50%;
    background: linear-gradient(#c43e17 0 30%, #f5d60a 30% 70%, #c43e17 70%);
}

.section-title {
    height: 30px;
    margin: 35px 0 0;
    display: flex;
    align-items: center;
    gap: 12px;
    font-size: 25px;
    font-weight: 500;
    color: #212a52;
}

.section-title svg {
    width: 30px;
    height: 30px;
    fill: #0a3ab5;
}

.section-title.general {
    margin-top: 34px;
}

.services {
    margin: 13px 0 0 56px;
}

.services.first {
    margin-top: 34px;
}

.services.single {
    margin-top: 12px;
}

.services.pay {
    margin-top: 25px;
}

.line {
    height: 30px;
    display: flex;
    align-items: center;
    font-size: 17.500px;
    white-space: nowrap;
}

.head {
    font-weight: 500;
    color: #2a3258;
}

.head.off {
    margin-bottom: -1px;
    color: #f5302f;
    font-weight: 400;
}

.svc-icon {
    width: 30px;
    height: 30px;
    margin-right: 13px;
    fill: #0a3ab5;
    flex-shrink: 0;
}

.svc-icon.pot {
    fill: none;
    stroke: #0a3ab5;
    stroke-width: 1.900;
}

.check {
    width: 30px;
    height: 18px;
    margin-left: 19px;
    fill: #4caf16;
}

.forbid {
    width: 26px;
    height: 26px;
    margin-left: 19px;
    fill: none;
    stroke: #e30c0c;
    stroke-width: 4;
}

.detail {
    margin-left: 44px;
}

.line b {
    font-weight: 500;
    color: #3a3a3a;
}

.gap19 {
    margin-left: 18px;
    color: #444;
}

.gap10 {
    margin-left: 10px;
    color: #444;
}

.line small {
    margin-left: 9px;
    font-size: 12px;
    color: #666;
}

.general-list {
    margin: 21px 0 0 56px;
}

.scrollbar {
    width: 18px;
    margin-left: auto;
    background-color: #f1f1f1;
    flex-shrink: 0;
}

.scroll-arrow {
    width: 0;
    height: 0;
    margin: 6px auto 0;
    border-left: 5px solid transparent;
    border-right: 5px solid transparent;
    border-bottom: 5px solid #a3a3a3;
}

.scroll-thumb {
    height: 200px;
    margin-top: 10px;
    background-color: #c1c1c1;
}

/* profile menu */
.profile {
    position: absolute;
    left: 1509px;
    top: 83px;
    width: 361px;
    height: 622px;
    background-color: #fff;
    border-radius: 8px 8px 4px 4px;
    box-shadow: 0 1px 5px rgba(0, 0, 0, 0.45);
    font-family: "Open Sans", sans-serif;
    color: #3c4043;
}

.profile-banner {
    position: relative;
    height: 108px;
    padding-top: 33px;
    background-color: #000;
    border-radius: 8px 8px 0 0;
    text-align: center;
}

.profile-domain {
    font-size: 16.500px;
    font-weight: 700;
    line-height: 22px;
    color: #fff;
}

.profile-edit {
    position: absolute;
    right: 29px;
    top: 70px;
    width: 20px;
    height: 20px;
    fill: #8f8f8f;
}

.profile-photo {
    position: relative;
    width: 85px;
    height: 85px;
    margin: -43px auto 0;
}

.profile-photo > svg {
    display: block;
    width: 85px;
    height: 85px;
}

.sync-badge {
    position: absolute;
    left: 59px;
    top: 58px;
    width: 24px;
    height: 24px;
    padding: 2px;
    background-color: #fff;
    border-radius: 50%;
    box-shadow: 0 0 3px rgba(0, 0, 0, 0.4);
}

.sync-dot {
    width: 20px;
    height: 20px;
    margin-right: 15px;
    margin-left: 0;
    background-color: #188038;
    border-radius: 50%;
    display: inline-flex;
    align-items: center;
    justify-content: center;
    flex-shrink: 0;
}

.sync-dot.large {
    margin: 0;
}

.sync-dot svg {
    width: 14px;
    height: 14px;
    fill: #fff;
}

.profile-name {
    margin: 12px 0 0 175px;
    font-size: 18px;
    line-height: 24px;
}

.profile-mail {
    margin: 4px 0 0 153px;
    font-size: 14.500px;
    line-height: 20px;
    color: #5f6368;
}

.profile-buttons {
    display: flex;
    justify-content: center;
    gap: 11px;
    margin: 18px 0 0 -2px;
}

.round-btn {
    width: 37px;
    height: 37px;
    border: 1px solid #dadce0;
    border-radius: 50%;
    display: flex;
    align-items: center;
    justify-content: center;
}

.round-btn svg {
    width: 20px;
    height: 20px;
    fill: #5f6368;
}

.menu-list {
    margin-top: 18px;
    height: 127px;
    padding: 0 0 0 20px;
    border-bottom: 1px solid #dadce0;
}

.menu-row {
    height: 38px;
    display: flex;
    align-items: center;
    font-size: 14px;
}

.menu-row:nth-child(2) {
    height: 36px;
}

.menu-row:nth-child(3) {
    margin-top: 4px;
}

.menu-g {
    width: 16px;
    height: 16px;
    margin: 0 17px 0 2px;
    fill: #5f6368;
    flex-shrink: 0;
}

.menu-x {
    width: 14px;
    height: 14px;
    margin: 0 18px 0 3px;
    fill: none;
    stroke: #5f6368;
    stroke-width: 2;
    flex-shrink: 0;
}

.others {
    padding: 21px 0 0 20px;
}

.others-head {
    height: 24px;
    padding-right: 29px;
    display: flex;
    align-items: center;
    justify-content: space-between;
    font-size: 13.800px;
    color: #5f6368;
}

.others-head svg {
    width: 21px;
    height: 21px;
    fill: #5f6368;
}

.profile-row {
    height: 40px;
    display: flex;
    align-items: center;
    font-size: 14px;
}

.profile-row.mascot {
    height: 26px;
    margin-top: 18px;
    margin-bottom: 0;
    padding-left: 1px;
}

.profile-row.mascot svg {
    width: 22px;
    height: 22px;
}

.letter-avatar {
    width: 25px;
    height: 25px;
    margin-right: 15px;
    background-color: #5566c4;
    border-radius: 50%;
    font-family: Roboto, sans-serif;
    font-size: 14px;
    line-height: 25px;
    text-align: center;
    color: #fff;
}

.guest {
    width: 25px;
    height: 25px;
    margin-right: 15px;
    fill: #5f6368;
}

.plus {
    width: 15px;
    height: 15px;
    margin: 0 20px 0 5px;
    fill: none;
    stroke: #5f6368;
    stroke-width: 1.600;
}

/* hand-drawn red marks */
.mark {
    position: absolute;
}

.mark-outer {
    left: 1509px;
    top: 501px;
    width: 366px;
    height: 216px;
    border: 7px solid #ed1c24;
    border-radius: 27px;
}

.mark-inner {
    left: 1519px;
    top: 663px;
    width: 130px;
    height: 40px;
    border: 3px solid #ed1c24;
    border-radius: 18px;
}
```
